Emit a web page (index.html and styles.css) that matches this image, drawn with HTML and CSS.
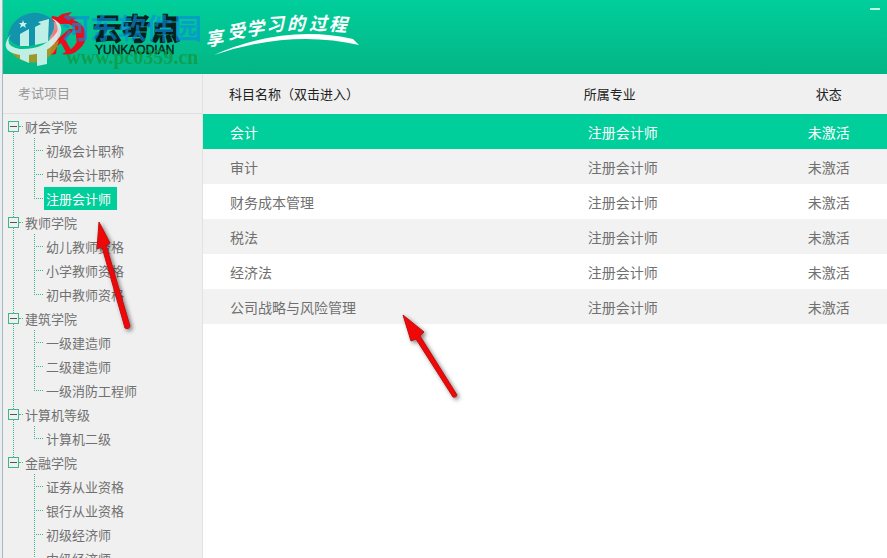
FILE: index.html
```html
<!DOCTYPE html>
<html lang="zh-CN">
<head>
<meta charset="UTF-8">
<meta name="viewport" content="width=device-width, initial-scale=1.0">
<title>云考点</title>
<link rel="stylesheet" href="styles.css">
</head>
<body>
<div class="window">
    <header class="banner">
        <svg class="logo" width="370" height="74" viewBox="0 0 370 74" role="img" aria-label="云考点">
            <!-- dragon -->
            <g fill="#e60f1b">
                <path d="M49 16 L55 17 L59 14 L69 12 L65 16 L74 18 L70 20 Q80 23 82 31 Q85 43 75 50 Q69 56 59 54 L68 49 Q76 43 75 34 Q73 27 66 24 L58 24 L52 23 L48 20 Z"/>
                <path d="M51 30 L57 29 L56 38 L66 29 L72 29 L62 39 L69 52 L64 54 L58 43 L54 46 L53 54 L47 55 Z"/>
                <path d="M72 29 L79 27 L77 32 L82 34 L77 38 L80 43 L74 43 Z"/>
            </g>
            <text class="logo-name" x="90" y="40">云考点</text>
            <text class="logo-latin" x="92" y="54">YUNKAODIAN</text>
            <!-- round badge -->
            <path d="M47 20 L56 24 L54 39 L48 48 L46 56 Z" fill="#ff8b97" opacity="0.8"/>
            <g opacity="0.88">
                <path d="M5 36 A27 27 0 0 1 50 20 Q54 30 44 40 Q32 47 18 46 Q8 44 5 36 Z" fill="#148eb0"/>
                <path d="M8 52 Q34 58 56 40 A27 27 0 0 1 8 52 Z" fill="#b29420"/>
                <path d="M17 34 L26 29 V46 H17 Z M32 27 L38 24 L35 22 L46 19 L45 42 L32 45 Z M17 52 H26 V63 L17 59 Z M34 51 L44 47 V64 L34 66 Z" fill="#d9f6f2"/>
                <path d="M8 34 Q0 46 17 49 Q42 50 54 32 Q57 25 48 18 Q62 23 57 36 Q45 57 17 55 Q-6 51 8 34 Z" fill="#d9f6f2"/>
                <path d="M20 20 L21 23 L24 23 L22 25 L23 28 L20 26 L17 28 L18 25 L16 23 L19 23 Z" fill="#e6f9fb"/>
            </g>
            <text class="mark-name" x="59" y="39">河东软件园</text>
            <text class="mark-url" x="63" y="64">www.pc0359.cn</text>
            <!-- slogan -->
            <g class="slogan">
                <text transform="translate(211 37) rotate(-8)">享</text>
                <text transform="translate(233 30) rotate(-8)">受</text>
                <text transform="translate(252 27) rotate(-6)">学</text>
                <text transform="translate(272 23) rotate(-4)">习</text>
                <text transform="translate(293 22)">的</text>
                <text transform="translate(315 22)">过</text>
                <text transform="translate(335 23) rotate(4)">程</text>
            </g>
            <path d="M211 55 Q282 24 350 39 L356 45 Q288 29 211 55 Z" fill="#fff"/>
        </svg>
        <button class="minimize" type="button" aria-label="最小化"></button>
    </header>

    <div class="content">
        <nav class="sidebar">
            <h2>考试项目</h2>
            <ul class="tree">
                <li class="group">
                    <div class="group-name"><button class="toggle" type="button" aria-label="折叠"></button><span>财会学院</span></div>
                    <ul>
                        <li><a href="#">初级会计职称</a></li>
                        <li><a href="#">中级会计职称</a></li>
                        <li><a href="#" class="selected">注册会计师</a></li>
                    </ul>
                </li>
                <li class="group">
                    <div class="group-name"><button class="toggle" type="button" aria-label="折叠"></button><span>教师学院</span></div>
                    <ul>
                        <li><a href="#">幼儿教师资格</a></li>
                        <li><a href="#">小学教师资格</a></li>
                        <li><a href="#">初中教师资格</a></li>
                    </ul>
                </li>
                <li class="group">
                    <div class="group-name"><button class="toggle" type="button" aria-label="折叠"></button><span>建筑学院</span></div>
                    <ul>
                        <li><a href="#">一级建造师</a></li>
                        <li><a href="#">二级建造师</a></li>
                        <li><a href="#">一级消防工程师</a></li>
                    </ul>
                </li>
                <li class="group">
                    <div class="group-name"><button class="toggle" type="button" aria-label="折叠"></button><span>计算机等级</span></div>
                    <ul>
                        <li><a href="#">计算机二级</a></li>
                    </ul>
                </li>
                <li class="group">
                    <div class="group-name"><button class="toggle" type="button" aria-label="折叠"></button><span>金融学院</span></div>
                    <ul class="more">
                        <li><a href="#">证券从业资格</a></li>
                        <li><a href="#">银行从业资格</a></li>
                        <li><a href="#">初级经济师</a></li>
                        <li><a href="#">中级经济师</a></li>
                    </ul>
                </li>
            </ul>
        </nav>

        <main class="subjects">
            <table>
                <thead>
                    <tr><th class="name">科目名称（双击进入）</th><th class="major">所属专业</th><th class="status">状态</th></tr>
                </thead>
                <tbody>
                    <tr class="selected"><td>会计</td><td>注册会计师</td><td>未激活</td></tr>
                    <tr><td>审计</td><td>注册会计师</td><td>未激活</td></tr>
                    <tr><td>财务成本管理</td><td>注册会计师</td><td>未激活</td></tr>
                    <tr><td>税法</td><td>注册会计师</td><td>未激活</td></tr>
                    <tr><td>经济法</td><td>注册会计师</td><td>未激活</td></tr>
                    <tr><td>公司战略与风险管理</td><td>注册会计师</td><td>未激活</td></tr>
                </tbody>
            </table>
        </main>
    </div>
</div>

<!-- pointer arrows over the window -->
<svg class="arrow arrow-tree" width="50" height="120" viewBox="0 0 50 120" aria-hidden="true">
    <path d="M8 7 L19 28 L15 30 L39 111 Q38 115 34 113 L11 32 L6 34 Z"/>
</svg>
<svg class="arrow arrow-table" width="70" height="100" viewBox="0 0 70 100" aria-hidden="true">
    <path d="M7 9 L28 26 L24 30 L61 89 Q60 92 57 91 L20 33 L15 35 Z"/>
</svg>
</body>
</html>
```
FILE: styles.css
```css
* {
    box-sizing: border-box;
}
body, html {
    margin: 0;
    padding: 0;
    height: 100%;
    overflow: hidden;
}
body {
    font-family: "Noto Sans CJK SC", sans-serif;
    font-size: 13px;
    color: #707070;
    background-color: #e9eef0;
    padding-left: 2px;
}
ul {
    list-style: none;
    margin: 0;
    padding: 0;
}
.window {
    display: flex;
    flex-direction: column;
    height: 100%;
    border-left: 1px solid #a9b9bf;
    background-color: #fff;
}

/* banner */
.banner {
    display: flex;
    justify-content: space-between;
    align-items: flex-start;
    flex-shrink: 0;
    height: 74px;
    background: linear-gradient(#00cf9b, #04b585);
}
.logo {
    display: block;
}
.logo-name {
    font-size: 29px;
    font-weight: 900;
    fill: #06201c;
    stroke: #06201c;
    stroke-width: 1px;
}
.logo-latin {
    font-family: "Liberation Sans", sans-serif;
    font-size: 12px;
    fill: #032018;
    stroke: #032018;
    stroke-width: 0.4px;
}
.mark-name {
    font-size: 28px;
    font-weight: bold;
    fill: #0a8be0;
    opacity: 0.65;
}
.mark-url {
    font-family: "Liberation Serif", serif;
    font-size: 20px;
    font-weight: bold;
    fill: #14963c;
    opacity: 0.75;
}
.slogan text {
    font-size: 18px;
    font-weight: bold;
    font-style: italic;
    fill: #fff;
    text-anchor: middle;
    dominant-baseline: central;
}
.minimize {
    width: 10px;
    height: 10px;
    margin: 0 7px;
    padding: 0;
    border: none;
    border-bottom: 2px solid #bff5e3;
    background: none;
    cursor: pointer;
}

/* sidebar */
.content {
    display: flex;
    flex: 1;
    min-height: 0;
}
.sidebar {
    flex: 0 0 200px;
    overflow: hidden;
    background-color: #f0f0f0;
    border-right: 1px solid #e2e2e2;
}
.sidebar h2 {
    height: 40px;
    margin: 0;
    padding-left: 15px;
    border-bottom: 1px solid #e0e0e0;
    font-size: 13px;
    font-weight: normal;
    line-height: 38px;
    color: #999;
}
.tree {
    padding-left: 5px;
}
.group {
    background: repeating-linear-gradient(#3cb98c 0 1px, transparent 1px 2px) 5px 0 / 1px 100% no-repeat;
}
.group:first-child {
    background-position: 5px 12px;
}
.group:last-child {
    background-size: 1px 8px;
}
.group-name {
    display: flex;
    align-items: center;
    height: 24px;
}
.toggle {
    width: 11px;
    height: 11px;
    padding: 0;
    border: 1px solid #3cb98c;
    background: linear-gradient(#555, #555) center / 7px 1px no-repeat #f0f0f0;
    cursor: pointer;
}
.group-name span {
    display: flex;
    align-items: center;
}
.group-name span::before {
    content: "";
    width: 4px;
    margin-right: 2px;
    border-top: 1px dotted #3cb98c;
}
.group ul {
    padding-left: 26px;
}
.group ul li {
    display: flex;
    align-items: center;
    height: 24px;
    background: repeating-linear-gradient(#3cb98c 0 1px, transparent 1px 2px) 0 0 / 1px 100% no-repeat;
}
.group ul li:last-child {
    background-size: 1px 13px;
}
.group .more li:last-child {
    background-size: 1px 100%;
}
.group ul li::before {
    content: "";
    width: 9px;
    margin-right: 1px;
    border-bottom: 1px dotted #3cb98c;
}
.tree a {
    padding: 0 6px 0 2px;
    line-height: 23px;
    color: #707070;
    text-decoration: none;
}
.tree a.selected {
    background-color: #00ce9b;
    color: #fff;
}

/* subject table */
.subjects {
    flex: 1;
}
table {
    width: 100%;
    border-collapse: collapse;
    table-layout: fixed;
}
th, td {
    padding: 0;
    text-align: left;
    font-weight: normal;
}
th {
    height: 40px;
    padding-bottom: 2px;
    font-size: 13px;
    color: #222;
    background-color: #f0f0f0;
}
td {
    height: 35px;
    font-size: 14px;
}
.name {
    width: 52%;
    padding-left: 26px;
}
.major {
    width: 31%;
    padding-left: 25px;
}
td:nth-child(1) {
    padding-left: 27px;
}
td:nth-child(2) {
    padding-left: 29px;
}
th:nth-child(3), td:nth-child(3) {
    text-align: center;
}
tbody tr:nth-child(even) {
    background-color: #f2f2f2;
}
tbody tr.selected {
    background-color: #00ce9b;
    color: #fff;
}

/* arrows */
.arrow {
    position: absolute;
    fill: #f00808;
    stroke: #c01010;
    stroke-width: 1px;
    filter: drop-shadow(2px 2px 2px rgba(0, 0, 0, 0.5));
    pointer-events: none;
}
.arrow-tree {
    left: 91px;
    top: 215px;
}
.arrow-table {
    left: 396px;
    top: 306px;
}
```
